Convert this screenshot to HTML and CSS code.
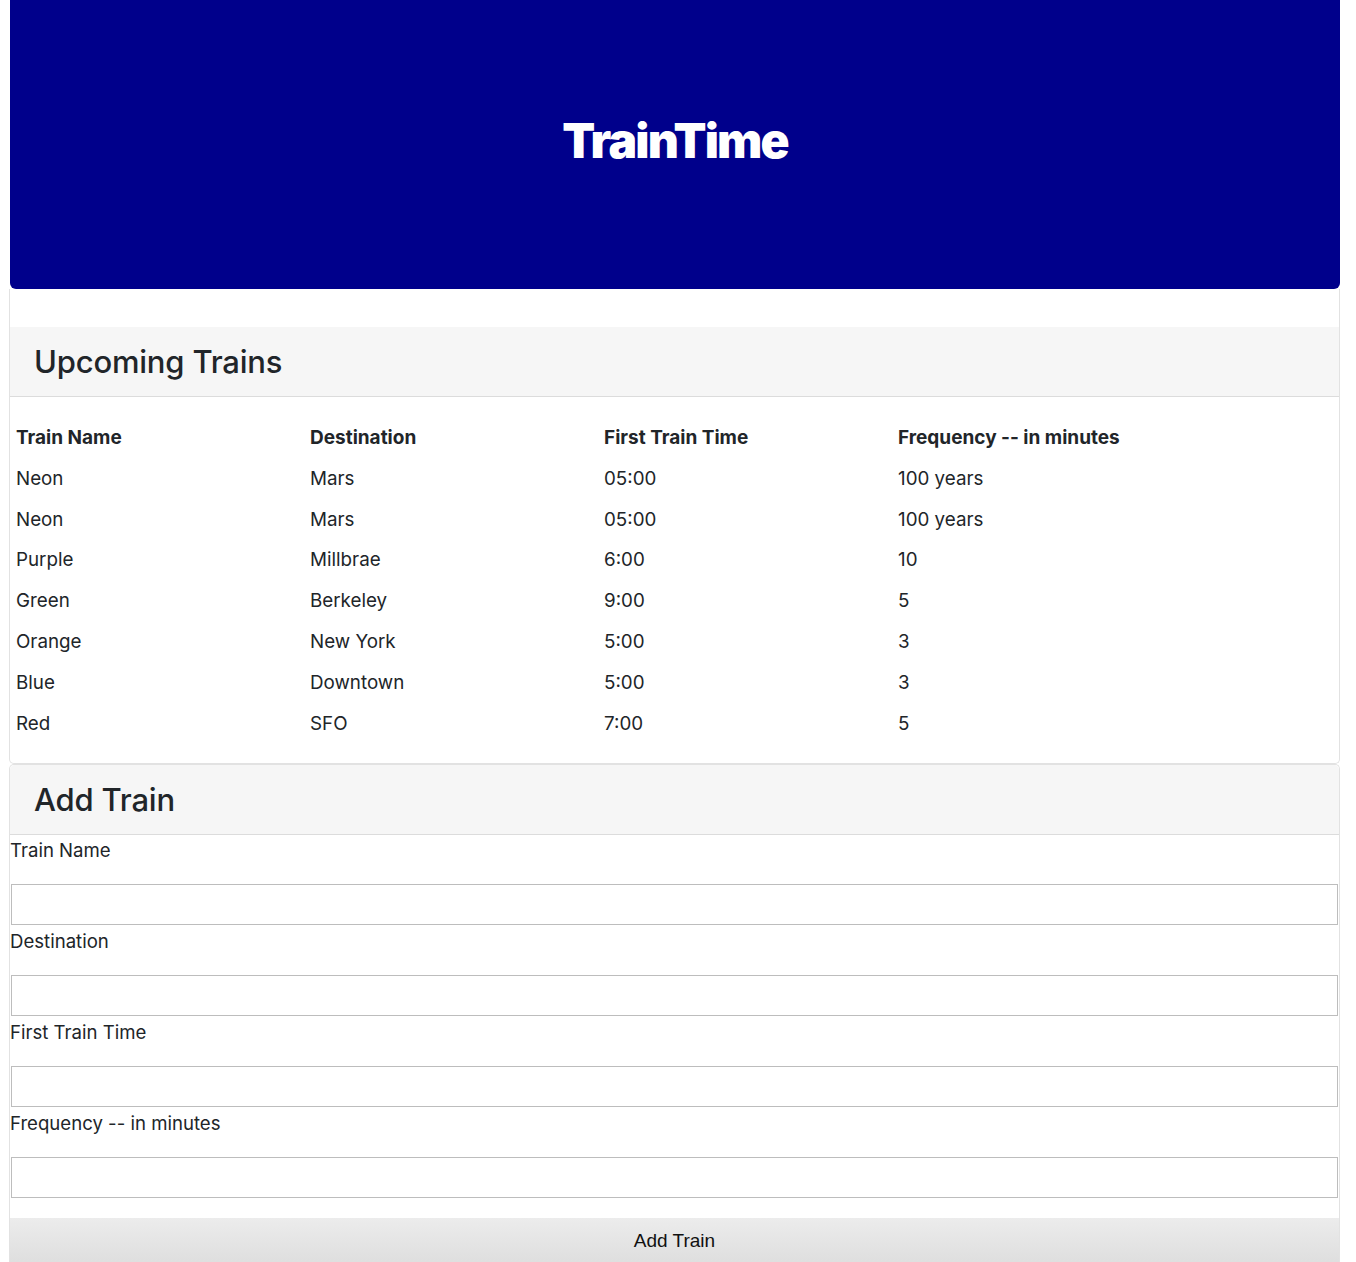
FILE: index.html
```html
<!DOCTYPE html>
<html lang="en">
<head>
<meta charset="utf-8">
<title>TrainTime</title>
<link rel="stylesheet" href="styles.css">
</head>
<body>
<div class="page">
  <header class="jumbotron">
    <h1 class="brand">TrainTime</h1>
  </header>

  <section class="card card-trains">
    <div class="card-header"><h2>Upcoming Trains</h2></div>
    <div class="table">
      <div class="row head">
        <div>Train Name</div><div>Destination</div><div>First Train Time</div><div>Frequency -- in minutes</div>
      </div>
      <div class="row"><div>Neon</div><div>Mars</div><div>05:00</div><div>100 years</div></div>
      <div class="row"><div>Neon</div><div>Mars</div><div>05:00</div><div>100 years</div></div>
      <div class="row"><div>Purple</div><div>Millbrae</div><div>6:00</div><div>10</div></div>
      <div class="row"><div>Green</div><div>Berkeley</div><div>9:00</div><div>5</div></div>
      <div class="row"><div>Orange</div><div>New York</div><div>5:00</div><div>3</div></div>
      <div class="row"><div>Blue</div><div>Downtown</div><div>5:00</div><div>3</div></div>
      <div class="row"><div>Red</div><div>SFO</div><div>7:00</div><div>5</div></div>
    </div>
  </section>

  <section class="card card-form">
    <div class="card-header"><h2>Add Train</h2></div>
    <form class="form">
      <label class="field-label first" for="name">Train Name</label>
      <input class="field" id="name" type="text">
      <label class="field-label" for="dest">Destination</label>
      <input class="field" id="dest" type="text">
      <label class="field-label" for="first">First Train Time</label>
      <input class="field" id="first" type="text">
      <label class="field-label" for="freq">Frequency -- in minutes</label>
      <input class="field" id="freq" type="text">
      <button class="btn" type="button">Add Train</button>
    </form>
  </section>
</div>
</body>
</html>
```

FILE: styles.css
```css
* { box-sizing: border-box; }

html, body {
  margin: 0;
  padding: 0;
  background: #fff;
}

body {
  font-family: Inter, "Noto Sans", "Liberation Sans", sans-serif;
  color: #212529;
  font-size: 18px;
}

.page {
  margin: 0 16px 0 10px;
}

.jumbotron {
  background: #00008b;
  height: 289px;
  border-radius: 0 0 6px 6px;
  display: flex;
  align-items: center;
  justify-content: center;
  padding-bottom: 8px;
}

.brand {
  margin: 0;
  color: #fff;
  font-size: 48px;
  font-weight: 900;
  letter-spacing: -1.8px;
  line-height: 1;
}

.card {
  border: 1px solid #e2e2e2;
  border-radius: 5px;
  background: #fff;
}

.card-trains {
  border-top: none;
  border-radius: 0 0 5px 5px;
  margin-left: -1px;
  padding-top: 38px;
}

.card-header {
  background: #f6f6f6;
  border-bottom: 1px solid #dcdcdc;
  height: 70px;
  display: flex;
  align-items: center;
  padding-left: 24px;
}

.card-header h2 {
  margin: 0;
  font-size: 31px;
  font-weight: 500;
  color: #212529;
  letter-spacing: -0.2px;
}

.card-form .card-header {
  border-radius: 5px 5px 0 0;
}

.table {
  padding: 20px 0 19px 6px;
  font-size: 18.8px;
}

.row {
  display: grid;
  grid-template-columns: 294px 294px 294px 1fr;
  height: 40.85px;
  align-items: center;
}

.row.head {
  font-weight: 700;
  font-size: 19px;
}

.card-form {
  margin-left: -1px;
  border-bottom: none;
  border-radius: 5px 5px 0 0;
}

.form {
  display: flex;
  flex-direction: column;
}

.field-label {
  display: block;
  line-height: 24px;
  margin: 4px 0 22px 0;
  font-size: 18.6px;
}

.field-label.first {
  margin-top: 3px;
}

.field {
  display: block;
  height: 41px;
  border: 1px solid #bdbdbd;
  margin: 0 0 0 1px;
  width: calc(100% - 2px);
  background: #fff;
  font: inherit;
}

.btn {
  margin-top: 20px;
  height: 46px;
  border: none;
  background: linear-gradient(#ececec, #dedede);
  font-family: "Liberation Sans", Arial, sans-serif;
  font-size: 19px;
  color: #111;
  padding: 0;
}
```
